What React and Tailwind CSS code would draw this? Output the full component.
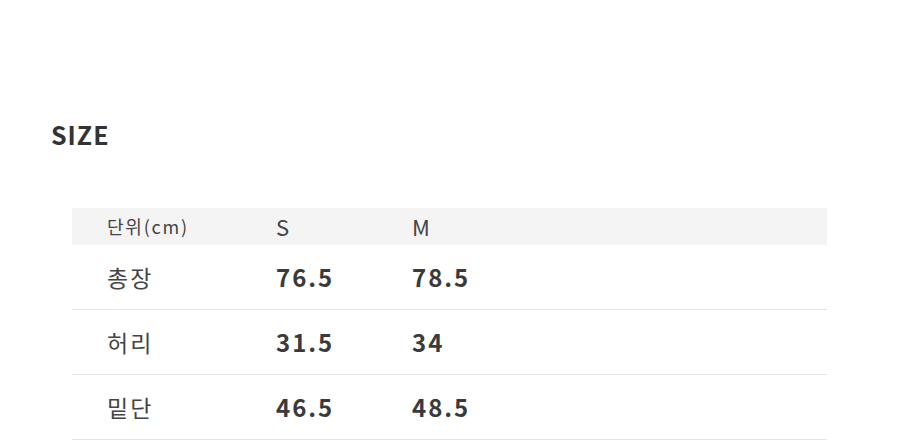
import React from 'react';

const rows = [
  { label: '총장', s: '76.5', m: '78.5' },
  { label: '허리', s: '31.5', m: '34' },
  { label: '밑단', s: '46.5', m: '48.5' },
];

const font = { fontFamily: '"Noto Sans CJK KR", "Noto Sans", sans-serif' };

export default function App() {
  return (
    <div className="w-[900px] h-[443px] bg-white text-[#3c3c3c] overflow-hidden" style={font}>
      <div className="pt-[116px] pl-[51px]">
        <h2 className="text-[25px] font-bold leading-[36px] tracking-[1px] text-[#333]">SIZE</h2>
      </div>
      <div className="mt-[56px] ml-[72px] w-[755px]">
        <div className="h-[37px] bg-[#f4f4f4] flex items-center text-[#444]">
          <div className="w-[204px] pl-[35px] text-[18px] tracking-[1.8px]">단위(cm)</div>
          <div className="w-[136px] text-[22px]">S</div>
          <div className="text-[22px]">M</div>
        </div>
        {rows.map((r) => (
          <div key={r.label} className="h-[65px] flex items-center border-b border-[#e4e4e4]">
            <div className="w-[204px] pl-[35px] text-[23px] tracking-[2px] text-[#444]">{r.label}</div>
            <div className="w-[136px] text-[24px] font-bold tracking-[2px] text-[#3a3a3a]">{r.s}</div>
            <div className="text-[24px] font-bold tracking-[2px] text-[#3a3a3a]">{r.m}</div>
          </div>
        ))}
      </div>
    </div>
  );
}
